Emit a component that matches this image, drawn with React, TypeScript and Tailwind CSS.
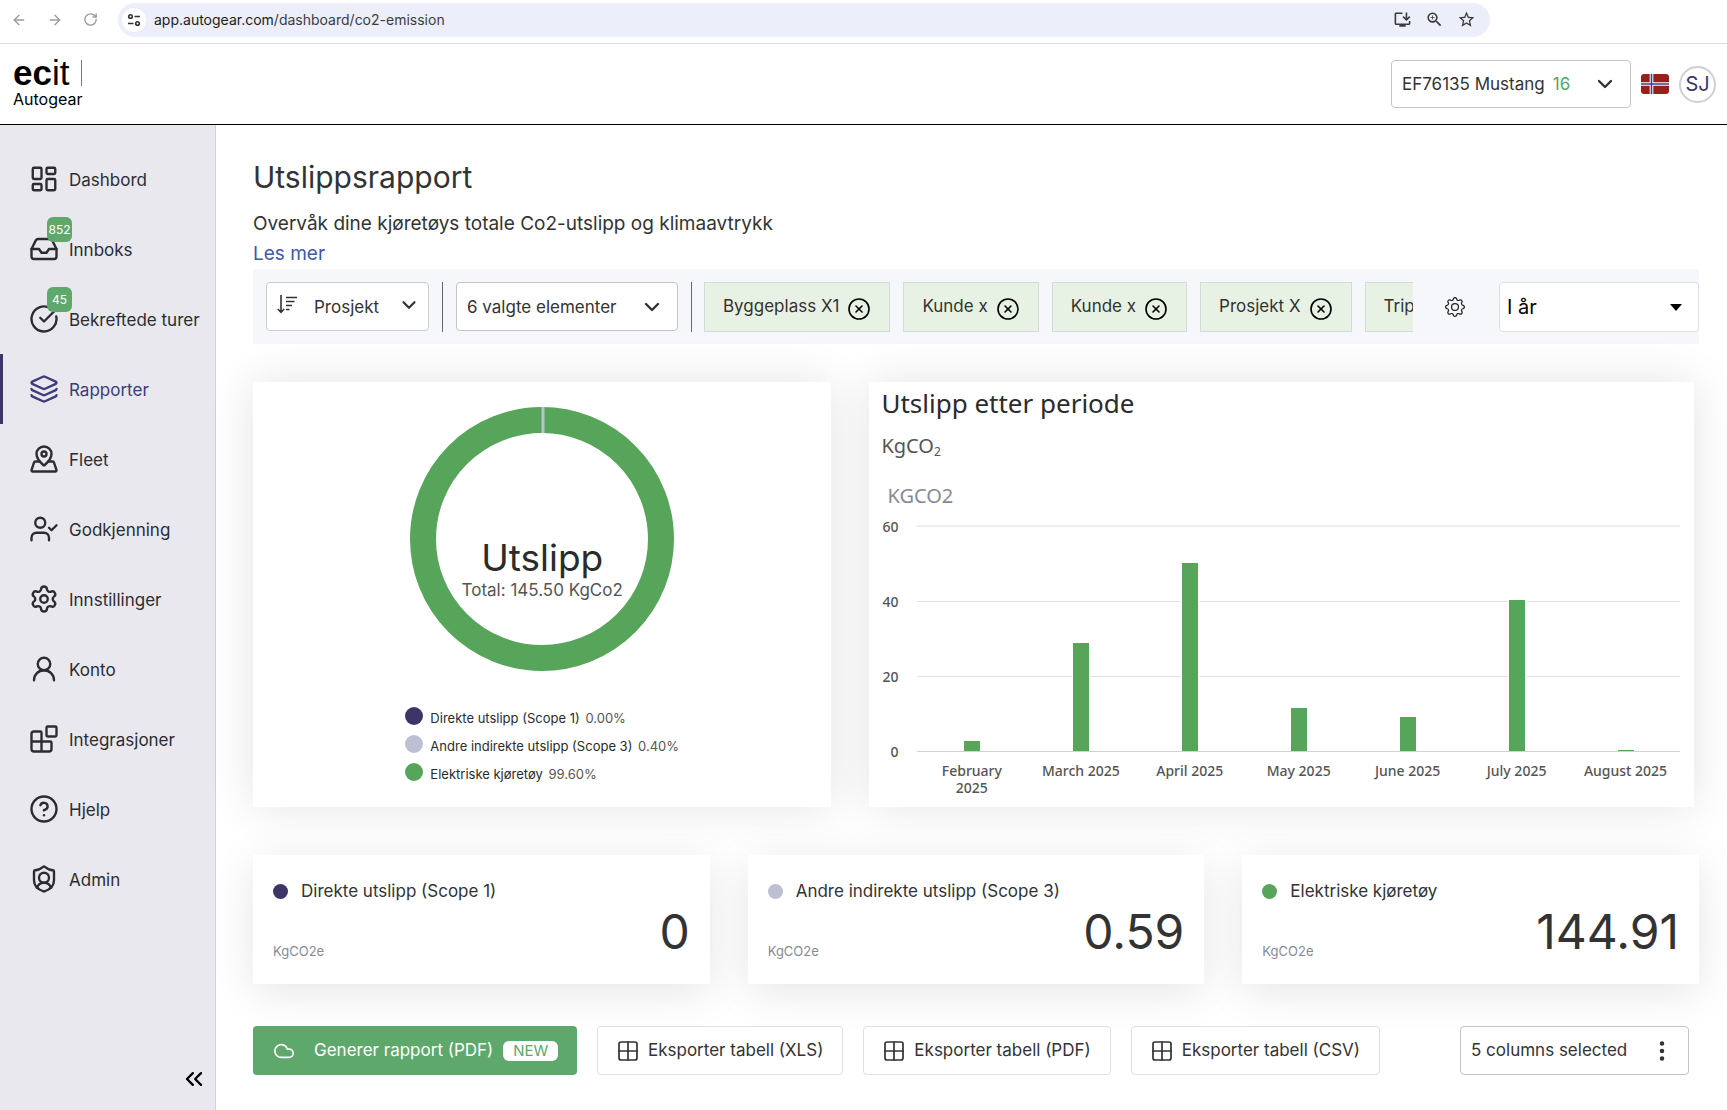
import {
  ArrowLeft,
  ArrowRight,
  Blocks,
  ChevronDown,
  ChevronsLeft,
  CircleCheckBig,
  CircleQuestionMark,
  CircleX,
  Cloud,
  Grid2x2,
  Inbox,
  Layers,
  LayoutDashboard,
  MapPinned,
  RotateCw,
  Settings,
  ShieldUser,
  UserCheck,
  UserRound,
  type LucideIcon,
} from "lucide-react";
import { BsGear, BsThreeDotsVertical } from "react-icons/bs";
import {
  MdOutlineInstallDesktop,
  MdOutlineZoomIn,
  MdStarOutline,
} from "react-icons/md";

interface INavItem {
  label: string;
  icon: LucideIcon;
  badge?: string;
  active?: boolean;
}

const navItems: INavItem[] = [
  { label: "Dashbord", icon: LayoutDashboard },
  { label: "Innboks", icon: Inbox, badge: "852" },
  { label: "Bekreftede turer", icon: CircleCheckBig, badge: "45" },
  { label: "Rapporter", icon: Layers, active: true },
  { label: "Fleet", icon: MapPinned },
  { label: "Godkjenning", icon: UserCheck },
  { label: "Innstillinger", icon: Settings },
  { label: "Konto", icon: UserRound },
  { label: "Integrasjoner", icon: Blocks },
  { label: "Hjelp", icon: CircleQuestionMark },
  { label: "Admin", icon: ShieldUser },
];

const chips = ["Byggeplass X1", "Kunde x", "Kunde x", "Prosjekt X", "Trip"];

const scopes = [
  { label: "Direkte utslipp (Scope 1)", percent: "0.00%", value: "0", dot: "bg-[#3d3468]" },
  { label: "Andre indirekte utslipp (Scope 3)", percent: "0.40%", value: "0.59", dot: "bg-[#bfbfd4]" },
  { label: "Elektriske kjøretøy", percent: "99.60%", value: "144.91", dot: "bg-[#57a55a]" },
];

const months = [
  { label: "February 2025", value: 2.6 },
  { label: "March 2025", value: 28.6 },
  { label: "April 2025", value: 49.8 },
  { label: "May 2025", value: 11.3 },
  { label: "June 2025", value: 8.9 },
  { label: "July 2025", value: 40.2 },
  { label: "August 2025", value: 0.4 },
];

const MAX_VALUE = 60;

const exports = ["XLS", "PDF", "CSV"];

const BrowserBar = () => (
  <div className="flex h-11 items-center border-b border-[#dadfdf] bg-white pb-1 pl-[11px]">
    <div className="flex items-center gap-5 text-[#9a9a9a]">
      <ArrowLeft size={16} strokeWidth={2} />
      <ArrowRight size={16} strokeWidth={2} />
      <RotateCw size={15} strokeWidth={2.2} />
    </div>
    <div className="ml-5 mr-[237px] flex h-[34px] flex-1 items-center rounded-full bg-[#eceefa] pl-1 pr-[14px]">
      <span className="flex size-6 items-center justify-center rounded-full bg-white">
        <svg width="14" height="14" viewBox="0 0 14 14" fill="none" stroke="#333" strokeWidth="1.6">
          <circle cx="3.5" cy="3.5" r="1.8" />
          <path d="M7.5 3.5H13M1 10.5h5.5" />
          <circle cx="10.5" cy="10.5" r="1.8" />
        </svg>
      </span>
      <span className="ml-2 flex-1 text-sm text-[#3c3c40]">
        <span className="text-[#1c1c20]">app.autogear.com</span>/dashboard/co2-emission
      </span>
      <div className="flex items-center gap-[13px] text-[#3a3a3e]">
        <MdOutlineInstallDesktop size={19} />
        <MdOutlineZoomIn size={19} />
        <MdStarOutline size={19} />
      </div>
    </div>
  </div>
);

const NorwayFlag = () => (
  <svg width="28" height="20" viewBox="0 0 28 20" role="img" aria-label="Norsk">
    <clipPath id="flag">
      <rect width="28" height="20" rx="3" />
    </clipPath>
    <g clipPath="url(#flag)">
      <rect width="28" height="20" fill="#96211b" />
      <path d="M10.5 0v20M0 10h28" stroke="#fff" strokeWidth="3.6" />
      <path d="M10.5 0v20M0 10h28" stroke="#3f3f8f" strokeWidth="1.6" />
    </g>
  </svg>
);

const Header = () => (
  <header className="flex h-[81px] items-center border-b border-black bg-white pl-[13px] pr-[11px]">
    <a href="#" className="pb-[3px] text-black" aria-label="ecit Autogear">
      <div className="flex h-8 items-center gap-3">
        <span className="font-['Liberation_Sans',sans-serif] text-[35px] leading-8">
          <b>ec</b>it
        </span>
        <span className="h-[26px] w-px bg-[#777]" />
      </div>
      <div className="text-base leading-5">Autogear</div>
    </a>
    <div className="ml-auto flex items-center gap-[10px]">
      <button
        type="button"
        aria-haspopup="listbox"
        className="flex h-12 w-60 items-center rounded border border-[#c4c4c8] pl-[10px] pr-[13px] text-[17px] text-[#333]"
      >
        <span className="pt-0.5">
          EF76135 Mustang
          <span className="ml-2 text-[#57a55a]">16</span>
        </span>
        <ChevronDown size={24} strokeWidth={2.4} className="ml-auto" />
      </button>
      <NorwayFlag />
      <button
        type="button"
        className="flex size-[37px] items-center justify-center rounded-full border-2 border-[#cfcfd8] text-xl text-[#3d3468]"
      >
        SJ
      </button>
    </div>
  </header>
);

const Sidebar = () => (
  <aside className="flex w-[216px] shrink-0 flex-col border-r border-[#d2d2da] bg-[#e9e8ee] pt-[19px]">
    <nav>
      {navItems.map((item) => (
        <a
          key={item.label}
          href="#"
          className={`flex h-[70px] items-center gap-[10px] border-l-[3px] pl-[26px] text-[17px] ${
            item.active
              ? "border-[#3d3468] text-[#3d3b7a]"
              : "border-transparent text-[#2c2c30]"
          }`}
        >
          <span className="relative">
            <item.icon size={30} strokeWidth={1.9} />
            {item.badge && (
              <span className="absolute -top-[17px] left-[18px] flex size-[25px] items-center justify-center rounded-md bg-[#5fa86c] text-xs text-white">
                {item.badge}
              </span>
            )}
          </span>
          <span className="whitespace-nowrap pt-[3px]">{item.label}</span>
        </a>
      ))}
    </nav>
    <button type="button" aria-label="Skjul meny" className="mb-[18px] ml-auto mr-[7px] mt-auto text-black">
      <ChevronsLeft size={28} />
    </button>
  </aside>
);

const SortIcon = () => (
  <svg width="20" height="20" viewBox="0 0 20 20" fill="none" stroke="currentColor" strokeWidth="1.6">
    <path d="M4 0v17M.8 14 4 17.4 7.2 14M9 2.5h11M9 6.5h8.5M9 10.5h6M9 14.5h3.5" />
  </svg>
);

const Divider = () => <span className="h-[50px] w-px shrink-0 bg-[#666]" />;

const FilterBar = () => (
  <div className="flex h-[75px] items-center bg-[#f5f7fa] pl-[13px] text-[17px] text-[#333]">
    <div className="flex shrink-0 items-center gap-[13px] pr-3">
      <div className="grid h-[49px] w-[163px] items-center rounded-sm border border-[#c9ced0] bg-white">
        <span className="pointer-events-none col-start-1 row-start-1 pb-1 pl-[10px]">
          <SortIcon />
        </span>
        <select aria-label="Grupper etter" className="col-start-1 row-start-1 h-full appearance-none pl-[47px] pt-0.5">
          <option>Prosjekt</option>
        </select>
        <ChevronDown
          size={22}
          strokeWidth={2.4}
          className="pointer-events-none col-start-1 row-start-1 mb-1 mr-2 justify-self-end"
        />
      </div>
      <Divider />
      <div className="grid h-[49px] w-[222px] items-center rounded border border-[#c4c4c8] bg-white">
        <select aria-label="Elementer" className="col-start-1 row-start-1 h-full appearance-none pl-[10px] pt-0.5">
          <option>6 valgte elementer</option>
        </select>
        <ChevronDown
          size={24}
          strokeWidth={2.4}
          className="pointer-events-none col-start-1 row-start-1 mr-[13px] justify-self-end"
        />
      </div>
      <Divider />
    </div>
    <div className="flex min-w-0 flex-1 gap-[13px] overflow-hidden">
      {chips.map((chip, index) => (
        <span
          key={index}
          className="flex h-[50px] shrink-0 items-center gap-2 whitespace-nowrap border border-[#d0dcdc] bg-[#e8f2e4] px-[18px]"
        >
          {chip}
          <button type="button" aria-label={`Fjern ${chip}`} className="pt-1 text-black">
            <CircleX size={24} strokeWidth={1.6} />
          </button>
        </span>
      ))}
    </div>
    <button type="button" aria-label="Innstillinger for filter" className="ml-8 mr-[34px] text-[#222]">
      <BsGear size={20} />
    </button>
    <div className="grid h-[50px] w-[200px] shrink-0 items-center rounded-sm border border-[#dde1e3] bg-white text-xl text-black">
      <select aria-label="Periode" className="col-start-1 row-start-1 h-full appearance-none pl-[7px]">
        <option>I år</option>
      </select>
      <svg width="12" height="8" viewBox="0 0 12 8" className="pointer-events-none col-start-1 row-start-1 mr-4 justify-self-end">
        <path d="M0 1h12L6 8z" />
      </svg>
    </div>
  </div>
);

const DonutCard = () => (
  <section className="flex h-[425px] flex-col items-center bg-white pt-6 shadow-[0_0_44px_rgba(0,0,0,0.11)]">
    <div className="grid place-items-center">
      <svg width="266" height="266" viewBox="0 0 266 266" fill="none" className="col-start-1 row-start-1">
        <circle cx="133" cy="133" r="119" stroke="#57a55a" strokeWidth="26" />
        <path d="M134 1v26" stroke="#bfbfd4" strokeWidth="3" />
      </svg>
      <div className="col-start-1 row-start-1 pt-[62px] text-center">
        <h2 className="text-[37px] leading-[40px] text-[#2b2b2b]">Utslipp</h2>
        <p className="text-[17px] leading-6 text-[#555]">Total: 145.50 KgCo2</p>
      </div>
    </div>
    <ul className="mt-8 text-[13px] text-[#2b2b2b]">
      {scopes.map((scope) => (
        <li key={scope.label} className="flex h-[28px] items-center gap-[7px]">
          <span className={`mb-1 size-[18px] rounded-full ${scope.dot}`} />
          <span className="pt-0.5">
            {scope.label} <span className="ml-0.5 text-[#555]">{scope.percent}</span>
          </span>
        </li>
      ))}
    </ul>
  </section>
);

const ChartCard = () => (
  <section className="h-[425px] bg-white pl-3 pr-[14px] font-['Noto_Sans','DejaVu_Sans',sans-serif] text-[#555] shadow-[0_0_44px_rgba(0,0,0,0.11)]">
    <h2 className="pt-[3px] text-[26px] leading-9 text-[#2b2b2b]">Utslipp etter periode</h2>
    <p className="pt-[9px] text-xl leading-8">
      KgCO<sub className="text-xs">2</sub>
    </p>
    <p className="pl-[6px] pt-[18px] text-xl leading-8 text-[#868a97]">KGCO2</p>
    <div className="mt-[13px] flex">
      <div className="-mb-[10px] -mt-2 flex w-[17px] flex-col justify-between text-right text-sm font-medium leading-5">
        <span>60</span>
        <span>40</span>
        <span>20</span>
        <span>0</span>
      </div>
      <div className="ml-[19px] grid h-[227px] flex-1">
        <div className="col-start-1 row-start-1 flex flex-col border-b border-[#ccd0e2]">
          <span className="flex-1 border-t-2 border-[#eeeef0]" />
          <span className="flex-1 border-t border-[#e2e2e6]" />
          <span className="flex-1 border-t border-[#e2e2e6]" />
        </div>
        <div className="col-start-1 row-start-1 mb-px flex items-end">
          {months.map((month) => (
            <div key={month.label} className="flex h-full flex-1 items-end justify-center">
              <div
                className="w-[18px] border-x border-white bg-[#57a55a]"
                style={{ height: `${(month.value / MAX_VALUE) * 100}%` }}
              />
            </div>
          ))}
        </div>
      </div>
    </div>
    <div className="ml-9 flex pt-[10px] text-center text-sm font-medium leading-[17px]">
      {months.map((month) => (
        <span key={month.label} className="flex-1 px-[10px]">
          {month.label}
        </span>
      ))}
    </div>
  </section>
);

const ScopeCards = () => (
  <div className="mt-12 grid grid-cols-3 gap-[38px]">
    {scopes.map((scope) => (
      <section key={scope.label} className="h-[129px] bg-white px-5 pt-[22px] shadow-[0_8px_44px_rgba(0,0,0,0.1)]">
        <h3 className="flex items-center gap-[13px] text-[17px] leading-7 text-[#333]">
          <span className={`size-[15px] rounded-full ${scope.dot}`} />
          {scope.label}
        </h3>
        <div className="flex h-14 items-end justify-between">
          <span className="text-[13px] leading-5 text-[#868a97]">KgCO2e</span>
          <span className="self-start text-5xl leading-[54px] text-[#333]">{scope.value}</span>
        </div>
      </section>
    ))}
  </div>
);

const Actions = () => (
  <div className="mt-[42px] flex gap-5 pr-[10px] text-[17px] text-[#333]">
    <button
      type="button"
      className="flex h-[49px] w-[324px] items-center rounded bg-[#5fa86c] pl-5 text-white"
    >
      <Cloud size={22} strokeWidth={1.8} />
      <span className="ml-[19px]">Generer rapport (PDF)</span>
      <span className="ml-[10px] rounded-md bg-white px-[10px] text-[15px] leading-5 text-[#5fa86c]">NEW</span>
    </button>
    {exports.map((format) => (
      <button
        key={format}
        type="button"
        className="flex h-[49px] items-center gap-2 rounded border border-[#e0e0e4] bg-white pl-[18px] pr-[19px]"
      >
        <Grid2x2 size={24} strokeWidth={1.7} />
        Eksporter tabell ({format})
      </button>
    ))}
    <button
      type="button"
      aria-haspopup="listbox"
      className="ml-auto flex h-[49px] w-[229px] items-center justify-between rounded border border-[#c4c4c8] bg-white pl-[10px] pr-[14px]"
    >
      5 columns selected
      <BsThreeDotsVertical size={24} />
    </button>
  </div>
);

const App = () => {
  return (
    <div className="flex min-h-screen flex-col bg-white font-['Inter','Open_Sans',sans-serif]">
      <BrowserBar />
      <Header />
      <div className="flex flex-1">
        <Sidebar />
        <main className="min-w-0 flex-1 pb-9 pl-[37px] pr-[28px] pt-8">
          <h1 className="text-3xl leading-10 text-[#333]">Utslippsrapport</h1>
          <p className="pt-3 text-[19px] leading-[30px] text-[#333]">
            Overvåk dine kjøretøys totale Co2-utslipp og klimaavtrykk
          </p>
          <a href="#" className="block w-fit text-[19px] leading-[30px] text-[#4257a8]">
            Les mer
          </a>
          <FilterBar />
          <div className="mt-[38px] grid grid-cols-[578fr_824fr] gap-[38px] pr-[5px]">
            <DonutCard />
            <ChartCard />
          </div>
          <ScopeCards />
          <Actions />
        </main>
      </div>
    </div>
  );
};

export default App;
